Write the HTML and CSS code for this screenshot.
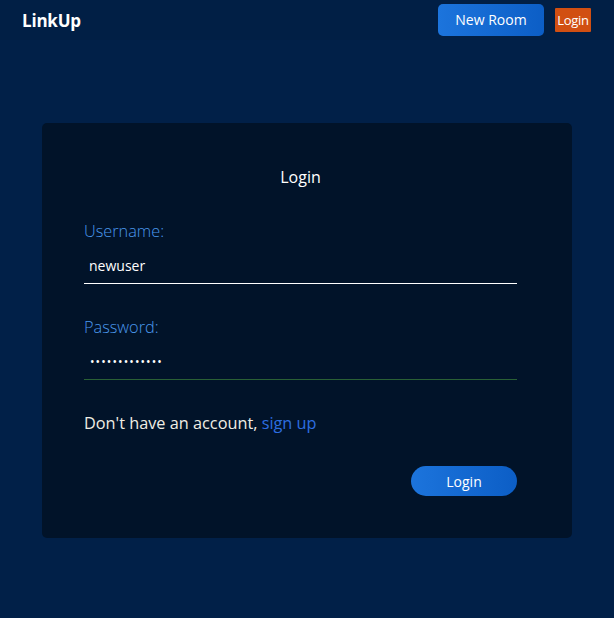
FILE: index.html
```html
<!DOCTYPE html>
<html lang="en">
<head>
<meta charset="utf-8">
<title>LinkUp</title>
<link rel="stylesheet" href="styles.css">
</head>
<body>
<header class="navbar">
  <span class="brand">LinkUp</span>
  <div class="nav-actions">
    <button class="btn-new">New Room</button>
    <button class="btn-login-nav">Login</button>
  </div>
</header>
<main class="main">
  <section class="card">
    <h1 class="title">Login</h1>
    <form class="form">
      <div class="field">
        <label class="label">Username:</label>
        <input class="input input-active" type="text" value="newuser">
      </div>
      <div class="field">
        <label class="label">Password:</label>
        <input class="input input-valid" type="password" value="password12345">
      </div>
      <p class="signup">Don't have an account, <a class="signup-link" href="#">sign up</a></p>
      <div class="submit-row">
        <button type="button" class="btn-submit">Login</button>
      </div>
    </form>
  </section>
</main>
</body>
</html>
```

FILE: styles.css
```css
* { box-sizing: border-box; }
html, body { margin: 0; padding: 0; }
body {
  background: #012048;
  font-family: "Open Sans", "Noto Sans", sans-serif;
  color: #ffffff;
  height: 618px;
  overflow: hidden;
}
.navbar {
  height: 40px;
  display: flex;
  align-items: center;
  justify-content: space-between;
  padding: 0 22px;
  background: #011f45;
}
.brand {
  font-weight: 700;
  font-size: 17px;
  color: #ffffff;
  letter-spacing: -0.2px;
}
.nav-actions {
  display: flex;
  align-items: center;
  gap: 11px;
  margin-right: 1px;
}
.btn-new {
  width: 106px;
  height: 32px;
  border: none;
  border-radius: 5px;
  background: linear-gradient(90deg, #1c74dc, #0c5ec6);
  color: #ffffff;
  font-family: "Open Sans", sans-serif;
  font-size: 14px;
  padding: 0;
  margin-top: -1px;
}
.btn-login-nav {
  width: 36px;
  height: 24px;
  border: none;
  border-radius: 1px;
  background: #d14f12;
  color: #ffffff;
  font-family: "Open Sans", sans-serif;
  font-size: 13px;
  padding: 0;
  letter-spacing: -0.3px;
}
.main {
  padding: 83px 42px 0;
}
.card {
  background: #011329;
  border-radius: 5px;
  height: 415px;
  padding: 42px 55px 0 42px;
}
.title {
  margin: 0;
  text-align: center;
  font-weight: 400;
  font-size: 16px;
  line-height: 24px;
  color: #ffffff;
}
.form {
  display: flex;
  flex-direction: column;
  margin-top: 31px;
}
.field {
  display: flex;
  flex-direction: column;
  margin-bottom: 32px;
}
.field + .field { margin-bottom: 31px; }
.label {
  color: #4a98ec;
  font-size: 16.3px;
  line-height: 22px;
  font-weight: 300;
}
.input {
  margin-top: 12px;
  height: 30px;
  background: transparent;
  border: none;
  border-bottom: 1px solid #ffffff;
  color: #ffffff;
  font-family: "Open Sans", sans-serif;
  font-size: 14px;
  padding: 0 5px 6px;
  outline: none;
}
.input-valid {
  border-bottom-color: #2a6035;
  font-size: 12px;
  letter-spacing: 1.1px;
  padding-left: 6px;
}
.signup {
  margin: 0;
  font-size: 16.3px;
  line-height: 24px;
  color: #f0eee4;
  font-weight: 400;
}
.signup-link {
  color: #2d6ee0;
  text-decoration: none;
}
.submit-row {
  display: flex;
  justify-content: flex-end;
  margin-top: 31px;
}
.btn-submit {
  width: 106px;
  height: 30px;
  border: none;
  border-radius: 15px;
  background: linear-gradient(90deg, #1c74dc, #0c5ec6);
  color: #ffffff;
  font-family: "Open Sans", sans-serif;
  font-size: 14px;
  padding: 0;
}
```
